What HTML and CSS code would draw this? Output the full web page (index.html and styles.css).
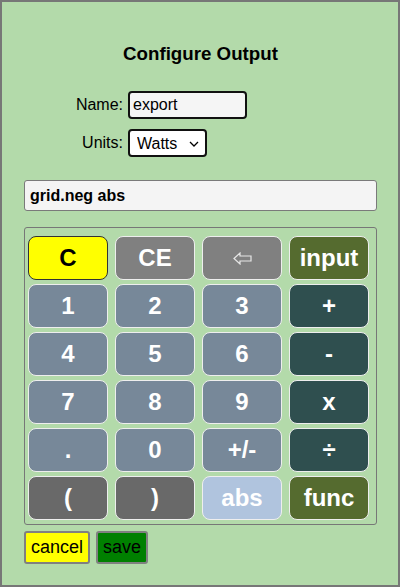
FILE: index.html
```html
<!DOCTYPE html>
<html lang="en">
<head>
<meta charset="utf-8">
<title>Configure Output</title>
<link rel="stylesheet" href="styles.css">
</head>
<body>
<div class="app">
  <h1 class="title">Configure Output</h1>
  <div class="fields">
    <label class="lbl" for="name">Name:</label>
    <input id="name" class="txt" type="text" value="export">
    <label class="lbl" for="units">Units:</label>
    <div class="sel-wrap">
      <select id="units" class="sel"><option>Watts</option></select>
      <svg class="chev" width="10" height="6" viewBox="0 0 10 6"><path d="M1 1 L5 5 L9 1" fill="none" stroke="#000" stroke-width="1.3"/></svg>
    </div>
  </div>
  <div class="expr">grid.neg abs</div>
  <div class="pad">
    <button class="key k-clear">C</button>
    <button class="key k-gray">CE</button>
    <button class="key k-gray"><svg width="19" height="13" viewBox="0 0 19 13"><path d="M1 6.5 L7 1 L7 4 L18 4 L18 9 L7 9 L7 12 Z" fill="none" stroke="#e6e6e6" stroke-width="1.2" stroke-linejoin="miter"/></svg></button>
    <button class="key k-olive">input</button>
    <button class="key k-num">1</button>
    <button class="key k-num">2</button>
    <button class="key k-num">3</button>
    <button class="key k-op">+</button>
    <button class="key k-num">4</button>
    <button class="key k-num">5</button>
    <button class="key k-num">6</button>
    <button class="key k-op">-</button>
    <button class="key k-num">7</button>
    <button class="key k-num">8</button>
    <button class="key k-num">9</button>
    <button class="key k-op">x</button>
    <button class="key k-num">.</button>
    <button class="key k-num">0</button>
    <button class="key k-num">+/-</button>
    <button class="key k-op">÷</button>
    <button class="key k-paren">(</button>
    <button class="key k-paren">)</button>
    <button class="key k-abs">abs</button>
    <button class="key k-olive">func</button>
  </div>
  <div class="actions">
    <button class="act cancel">cancel</button>
    <button class="act save">save</button>
  </div>
</div>
</body>
</html>
```

FILE: styles.css
```css
html, body {
  margin: 0;
  padding: 0;
}
body {
  font-family: "Liberation Sans", Arial, sans-serif;
  color: #000;
}
.app {
  box-sizing: border-box;
  width: 400px;
  height: 587px;
  border: 2px solid #777;
  background: #b3daaa;
  padding: 0 21px 0 22px;
}
.title {
  margin: 42px 0 0;
  font-size: 18.72px;
  line-height: 20px;
  font-weight: bold;
  text-align: center;
}
.fields {
  margin-top: 27px;
  display: grid;
  grid-template-columns: 99px auto;
  column-gap: 5px;
  row-gap: 10px;
  align-items: center;
  justify-items: start;
}
.lbl {
  justify-self: end;
  font-size: 16px;
}
.txt {
  box-sizing: border-box;
  width: 119px;
  height: 28px;
  border: 2px solid #111;
  border-radius: 4px;
  background: #f5f5f5;
  font-family: "Liberation Sans", Arial, sans-serif;
  font-size: 16px;
  padding: 0 3px;
  color: #000;
}
.sel-wrap {
  position: relative;
  width: 79px;
  height: 28px;
}
.sel {
  appearance: none;
  -webkit-appearance: none;
  box-sizing: border-box;
  width: 79px;
  height: 28px;
  border: 2px solid #111;
  border-radius: 4px;
  background: #fff;
  font-family: "Liberation Sans", Arial, sans-serif;
  font-size: 16px;
  padding: 0 0 0 7px;
  color: #000;
}
.chev {
  position: absolute;
  right: 8px;
  top: 12px;
  pointer-events: none;
}
.expr {
  margin-top: 23px;
  box-sizing: border-box;
  height: 31px;
  border: 1px solid #7a7a7a;
  border-radius: 3px;
  background: #f4f4f4;
  font-weight: bold;
  font-size: 16px;
  line-height: 29px;
  padding-left: 5px;
}
.pad {
  margin-top: 16px;
  box-sizing: border-box;
  height: 298px;
  border: 1px solid #777;
  border-radius: 3px;
  padding: 8px 7px 4px 3px;
  display: grid;
  grid-template-columns: repeat(4, 80px);
  grid-auto-rows: 44px;
  column-gap: 7px;
  row-gap: 4px;
}
.key {
  box-sizing: border-box;
  margin: 0;
  padding: 0;
  border: 1px solid #eee;
  border-radius: 8px;
  font-family: "Liberation Sans", Arial, sans-serif;
  font-size: 24px;
  font-weight: bold;
  color: #fff;
  display: flex;
  align-items: center;
  justify-content: center;
}
.k-clear { background: #ffff00; color: #000; border-color: #333; }
.k-gray { background: #808080; }
.k-olive { background: #556b2f; }
.k-num { background: #778899; }
.k-op { background: #2f4f4f; }
.k-paren { background: #696969; }
.k-abs { background: #b0c4de; }
.actions {
  margin-top: 6px;
  display: flex;
  gap: 6px;
}
.act {
  box-sizing: border-box;
  height: 33px;
  margin: 0;
  padding: 0 5px;
  border: 2px solid #808080;
  border-radius: 3px;
  font-family: "Liberation Sans", Arial, sans-serif;
  font-size: 18px;
  color: #000;
}
.cancel { background: #ffff00; }
.save { background: #008000; }
```
